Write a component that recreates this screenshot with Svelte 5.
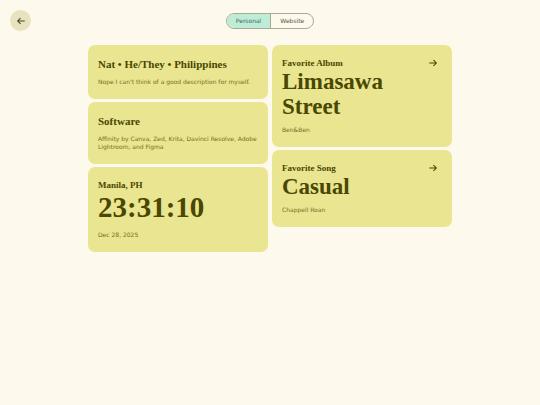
<script>
    let tab = $state('personal');

    const tabs = [
        { id: 'personal', label: 'Personal' },
        { id: 'website', label: 'Website' }
    ];

    const columns = [
        [
            { title: 'Nat • He/They • Philippines', text: "Nope I can't think of a good description for myself." },
            { title: 'Software', text: 'Affinity by Canva, Zed, Krita, Davinci Resolve, Adobe Lightroom, and Figma' },
            { label: 'Manila, PH', value: '23:31:10', text: 'Dec 28, 2025', clock: true }
        ],
        [
            { label: 'Favorite Album', value: 'Limasawa Street', text: 'Ben&Ben', href: '#album' },
            { label: 'Favorite Song', value: 'Casual', text: 'Chappell Roan', href: '#song' }
        ]
    ];
</script>

<header>
    <button class="back" aria-label="Back">
        <svg viewBox="0 0 24 24" aria-hidden="true">
            <path d="M21 12H4M11 5l-7 7 7 7" />
        </svg>
    </button>
    <nav class="tabs">
        {#each tabs as item}
            <button class:active={tab === item.id} aria-pressed={tab === item.id} onclick={() => (tab = item.id)}>
                {item.label}
            </button>
        {/each}
    </nav>
</header>

<main>
    {#each columns as cards}
        <div class="column">
            {#each cards as card}
                <section class="card">
                    {#if card.title}
                        <h2>{card.title}</h2>
                    {:else}
                        <div class="top">
                            <h3>{card.label}</h3>
                            {#if card.href}
                                <a href={card.href} aria-label={card.value}>
                                    <svg viewBox="0 0 24 24" aria-hidden="true">
                                        <path d="M3 12h17M13 5l7 7-7 7" />
                                    </svg>
                                </a>
                            {/if}
                        </div>
                        <div class="value" class:clock={card.clock}>{card.value}</div>
                    {/if}
                    <p>{card.text}</p>
                </section>
            {/each}
        </div>
    {/each}
</main>

<style>
    :global(body) {
        margin: 0;
        background: #fef9ed;
        color: #4a4700;
        font-family: "DejaVu Sans", sans-serif;
    }

    header {
        display: grid;
        grid-template-columns: 1fr auto 1fr;
        align-items: center;
        padding: 10px 10px 0;
    }

    button {
        border: 0;
        padding: 0;
        font: inherit;
        color: inherit;
        cursor: pointer;
    }

    svg {
        display: block;
        width: 10px;
        height: 10px;
        fill: none;
        stroke: currentColor;
        stroke-width: 2.5;
    }

    .back {
        display: flex;
        align-items: center;
        justify-content: center;
        width: 21px;
        height: 21px;
        border-radius: 50%;
        background: #e7e3bf;
        color: #45432b;
    }

    .tabs {
        display: flex;
        border: 1px solid #a9aa94;
        border-radius: 8px;
        overflow: hidden;
    }

    .tabs button {
        height: 14px;
        padding: 0 9px;
        background: transparent;
        color: #55533f;
        font-size: 6px;
        line-height: 14px;
    }

    .tabs button + button {
        border-left: 1px solid #a9aa94;
    }

    .tabs .active {
        background: #beecd6;
        color: #41685a;
    }

    main {
        display: grid;
        grid-template-columns: 1fr 1fr;
        align-items: start;
        gap: 4px;
        max-width: 364px;
        margin: 14px auto 0;
    }

    .column {
        display: flex;
        flex-direction: column;
        gap: 3px;
    }

    .card {
        padding: 12px 10px 13px;
        border-radius: 7px;
        background: #e9e590;
    }

    h2,
    h3,
    .value {
        margin: 0;
        font-family: "Liberation Serif", serif;
        font-weight: 700;
    }

    h2 {
        font-size: 11px;
        line-height: 15px;
    }

    .top {
        display: flex;
        align-items: center;
        justify-content: space-between;
    }

    h3 {
        font-size: 9px;
        line-height: 12px;
    }

    a {
        margin-right: 4px;
        color: inherit;
    }

    .value {
        max-width: 120px;
        padding-bottom: 1px;
        font-size: 23px;
        line-height: 25px;
    }

    .clock {
        padding-bottom: 2px;
        font-size: 29px;
        line-height: 32px;
    }

    p {
        margin: 6px 0 0;
        color: #747126;
        font-size: 6px;
        line-height: 8px;
    }
</style>
